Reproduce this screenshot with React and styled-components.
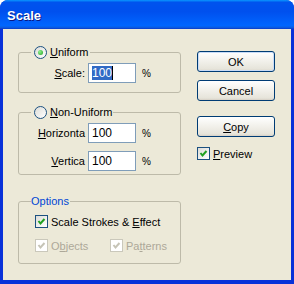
import React from "react";
import styled, { createGlobalStyle } from "styled-components";

const GlobalStyle = createGlobalStyle`
  html, body {
    margin: 0;
    padding: 0;
    background: #ffffff;
  }
  body {
    font-family: "Liberation Sans", Arial, sans-serif;
    font-size: 11px;
    color: #000;
  }
`;

function Check({ checked, disabled }) {
  return (
    <CheckBox $disabled={disabled}>
      {checked && (
        <svg width="11" height="11" viewBox="0 0 11 11">
          <polyline
            points="2.5,5 4.5,7.5 8.5,3"
            fill="none"
            stroke={disabled ? "#c6c4b6" : "#21a121"}
            strokeWidth="2"
          />
        </svg>
      )}
    </CheckBox>
  );
}

function Key({ children }) {
  return <u>{children}</u>;
}

export default function App() {
  return (
    <>
      <GlobalStyle />
      <Window>
        <TitleBar>
          <Title>Scale</Title>
        </TitleBar>
        <Body>
          <LeftColumn>
            <Group $gap={0}>
              <Legend $inset={3}>
                <Radio $checked />
                <span>
                  <Key>U</Key>niform
                </span>
              </Legend>
              <FieldGrid $top={4} $bottom={9}>
                <FieldLabel>
                  <Key>S</Key>cale:
                </FieldLabel>
                <Field>
                  <Selected>100</Selected>
                  <Caret />
                </Field>
                <Unit>%</Unit>
              </FieldGrid>
            </Group>

            <Group $gap={13}>
              <Legend $inset={3}>
                <Radio />
                <span>
                  <Key>N</Key>on-Uniform
                </span>
              </Legend>
              <FieldGrid $top={4} $bottom={3}>
                <FieldLabel>
                  <Key>H</Key>orizonta
                </FieldLabel>
                <Field>100</Field>
                <Unit>%</Unit>
                <FieldLabel>
                  <Key>V</Key>ertica
                </FieldLabel>
                <Field>100</Field>
                <Unit>%</Unit>
              </FieldGrid>
            </Group>

            <Group $gap={20}>
              <Legend $inset={0}>
                <LegendText>Options</LegendText>
              </Legend>
              <Options>
                <CheckRow>
                  <Check checked />
                  <span>
                    Scale Strokes &amp; <Key>E</Key>ffect
                  </span>
                </CheckRow>
                <CheckLine>
                  <CheckRow $disabled $width={75}>
                    <Check checked disabled />
                    <span>
                      O<Key>b</Key>jects
                    </span>
                  </CheckRow>
                  <CheckRow $disabled>
                    <Check checked disabled />
                    <span>
                      Pa<Key>t</Key>terns
                    </span>
                  </CheckRow>
                </CheckLine>
              </Options>
            </Group>
          </LeftColumn>

          <RightColumn>
            <Button $default>OK</Button>
            <Button $gap={8}>Cancel</Button>
            <Button $gap={15}>
              <Key>C</Key>opy
            </Button>
            <PreviewRow>
              <Check checked />
              <span>
                <Key>P</Key>review
              </span>
            </PreviewRow>
          </RightColumn>
        </Body>
      </Window>
    </>
  );
}

const Window = styled.div`
  width: 294px;
  height: 284px;
  display: flex;
  flex-direction: column;
  border-radius: 8px 8px 0 0;
  overflow: hidden;
  background: #0831d9;
`;

const TitleBar = styled.div`
  height: 29px;
  flex: none;
  display: flex;
  align-items: center;
  padding: 0 7px;
  background: linear-gradient(
    180deg,
    #0997ff 0%,
    #0053ee 8%,
    #0050ee 40%,
    #0066ff 88%,
    #0a5fe5 94%,
    #0a3ac8 100%
  );
`;

const Title = styled.div`
  color: #ffffff;
  font-family: "Liberation Sans", Arial, sans-serif;
  font-weight: bold;
  font-size: 13px;
  text-shadow: 1px 1px 0 #0a1883;
  padding-top: 2px;
`;

const Body = styled.div`
  flex: 1;
  display: flex;
  margin: 0 3px 4px 3px;
  background: #ece9d8;
`;

const LeftColumn = styled.div`
  width: 163px;
  margin-left: 15px;
  padding-top: 17px;
  display: flex;
  flex-direction: column;
`;

const Group = styled.fieldset`
  margin: ${(p) => p.$gap}px 0 0 0;
  padding: 0 0 0 12px;
  border: 1px solid #bdbaa9;
  border-radius: 3px;
  min-width: 0;
`;

const Legend = styled.legend`
  padding: 0 1px 0 ${(p) => p.$inset}px;
  margin: 0;
  display: flex;
  align-items: center;
  gap: 3px;
  height: 13px;
  line-height: 13px;
`;

const LegendText = styled.span`
  color: #0046d5;
`;

const Radio = styled.span`
  width: 13px;
  height: 13px;
  box-sizing: border-box;
  border-radius: 50%;
  border: 1px solid #1c5180;
  background: linear-gradient(135deg, #dcdcd7, #ffffff);
  display: flex;
  align-items: center;
  justify-content: center;

  &::after {
    content: "";
    width: 5px;
    height: 5px;
    border-radius: 50%;
    background: ${(p) =>
      p.$checked
        ? "radial-gradient(circle at 35% 35%, #8ff28f, #21a121)"
        : "transparent"};
  }
`;

const FieldGrid = styled.div`
  display: grid;
  grid-template-columns: 52px 48px auto;
  column-gap: 3px;
  row-gap: 8px;
  align-items: center;
  padding: ${(p) => p.$top}px 0 ${(p) => p.$bottom}px 2px;
`;

const FieldLabel = styled.div`
  text-align: right;
  white-space: nowrap;
`;

const Field = styled.div`
  height: 20px;
  box-sizing: border-box;
  border: 1px solid #7f9db9;
  background: #ffffff;
  display: flex;
  align-items: center;
  padding-left: 3px;
  font-size: 12px;
`;

const Selected = styled.span`
  background: #316ac5;
  color: #ffffff;
  line-height: 14px;
`;

const Caret = styled.span`
  width: 1px;
  height: 14px;
  background: #000;
`;

const Unit = styled.div`
  margin-left: 3px;
  font-size: 10px;
`;

const Options = styled.div`
  width: 134px;
  padding: 7px 0 11px 4px;
  display: flex;
  flex-direction: column;
  gap: 11px;
`;

const CheckLine = styled.div`
  display: flex;
`;

const CheckRow = styled.div`
  display: flex;
  align-items: center;
  gap: 3px;
  white-space: nowrap;
  height: 13px;
  flex: none;
  width: ${(p) => (p.$width ? `${p.$width}px` : "auto")};
  color: ${(p) => (p.$disabled ? "#aca899" : "#000")};
`;

const CheckBox = styled.span`
  width: 13px;
  height: 13px;
  flex: none;
  box-sizing: border-box;
  border: 1px solid ${(p) => (p.$disabled ? "#cac8bb" : "#1c5180")};
  background: ${(p) =>
    p.$disabled ? "#ffffff" : "linear-gradient(135deg, #dcdcd7, #ffffff)"};
  display: flex;
  align-items: center;
  justify-content: center;
`;

const RightColumn = styled.div`
  width: 78px;
  margin-left: 16px;
  padding-top: 22px;
  display: flex;
  flex-direction: column;
`;

const Button = styled.button`
  height: 21px;
  margin-top: ${(p) => p.$gap || 0}px;
  padding: 0;
  font-family: "Liberation Sans", Arial, sans-serif;
  font-size: 11px;
  color: #000;
  border: 1px solid #003c74;
  border-radius: 3px;
  background: linear-gradient(180deg, #ffffff 0%, #f4f3ee 40%, #e6e4da 90%, #d6d0c5 100%);
  box-shadow: ${(p) =>
    p.$default ? "inset 0 0 0 1px #c9dcf7" : "none"};
`;

const PreviewRow = styled(CheckRow)`
  margin-top: 10px;
`;
